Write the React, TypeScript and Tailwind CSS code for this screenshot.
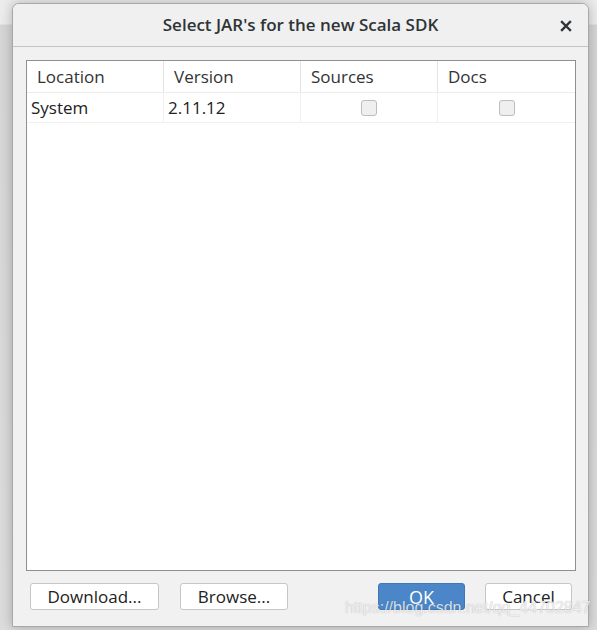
import React from "react";

const COLS = ["Location", "Version", "Sources", "Docs"];

function Check() {
  return (
    <span className="block h-[16px] w-[16px] rounded-[3px] border border-[#bdbdbd] bg-[#efefef]" />
  );
}

export default function App() {
  return (
    <div className="relative h-[630px] w-[597px] overflow-hidden bg-[linear-gradient(to_bottom,#ececec_0px,#ececec_24px,#d6d6d6_25px,#dcdcdc_100%)] font-['Open_Sans',sans-serif]">
      {/* dialog */}
      <div className="ml-[12px] mt-[3px] flex h-[624px] w-[577px] flex-col overflow-hidden rounded-t-[7px] border border-[#a8a8a8] bg-[#f1f1f1] shadow-[0_0_12px_rgba(0,0,0,0.25)]">
        {/* title bar */}
        <div className="relative flex h-[43px] shrink-0 items-center justify-center border-b border-[#c4c4c4] bg-[#f0f0f0]">
          <span className="text-[17px] font-semibold text-[#2e3436]">
            Select JAR's for the new Scala SDK
          </span>
          <svg
            className="absolute right-[16px] top-[16px]"
            width="12"
            height="12"
            viewBox="0 0 12 12"
          >
            <path d="M2 2L10 10M10 2L2 10" stroke="#2e3436" strokeWidth="2.4" strokeLinecap="square" />
          </svg>
        </div>

        {/* body */}
        <div className="flex flex-1 flex-col px-[13px] pt-[13px]">
          <div className="h-[511px] w-[550px] border border-[#8f8f8f] bg-white">
            <div className="grid h-[32px] grid-cols-4 border-b border-[#ececec] text-[17px] text-[#333333]">
              {COLS.map((c, i) => (
                <div
                  key={c}
                  className={`flex items-center pl-[10px] ${i < 3 ? "border-r border-[#e4e4e4]" : ""}`}
                >
                  {c}
                </div>
              ))}
            </div>
            <div className="grid h-[30px] grid-cols-4 border-b border-[#f0f0f0] text-[17px] text-[#222222]">
              <div className="flex items-center border-r border-[#f0f0f0] pl-[4px]">System</div>
              <div className="flex items-center border-r border-[#f0f0f0] pl-[4px]">2.11.12</div>
              <div className="flex items-center justify-center border-r border-[#f0f0f0]">
                <Check />
              </div>
              <div className="flex items-center justify-center">
                <Check />
              </div>
            </div>
          </div>

          <div className="mt-[12px] flex items-center pl-[4px] pr-[3px] text-[17px] text-[#222222]">
            <button className="h-[27px] w-[129px] rounded-[3px] border border-[#c6c6c6] bg-white">
              Download...
            </button>
            <button className="ml-[21px] h-[27px] w-[108px] rounded-[3px] border border-[#c6c6c6] bg-white">
              Browse...
            </button>
            <button className="ml-auto h-[27px] w-[87px] rounded-[3px] border border-[#3f78b8] bg-[#4a86c8] text-[18px] text-white">
              OK
            </button>
            <button className="ml-[20px] h-[27px] w-[87px] rounded-[3px] border border-[#c6c6c6] bg-white">
              Cancel
            </button>
          </div>
        </div>
      </div>

      {/* watermark */}
      <span className="absolute left-[345px] top-[596px] font-['Liberation_Sans',sans-serif] text-[16px] text-white/80 [text-shadow:0_0_1px_rgba(0,0,0,0.35)]">
        https://blog.csdn.net/qq_44702847
      </span>
    </div>
  );
}
